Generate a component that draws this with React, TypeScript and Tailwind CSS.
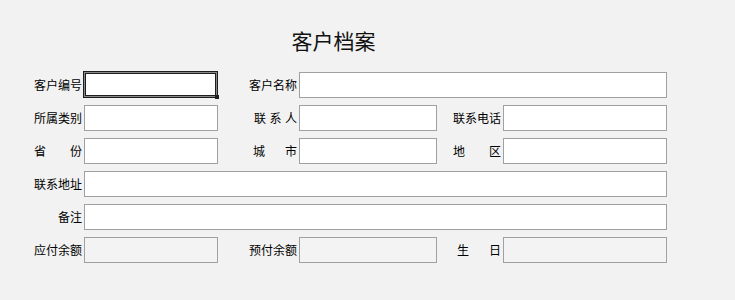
import React from "react";

const font = { fontFamily: '"Microsoft YaHei", "Noto Sans CJK SC", sans-serif' };

function Label({ text, spread, width = 48 }: { text: string; spread?: boolean; width?: number }) {
  // spread labels put their characters apart, like "省　份"
  if (spread) {
    return (
      <div className="flex h-[26px] items-center justify-end pr-[2px]">
        <div className="flex justify-between text-[12px] text-black" style={{ width }}>
          {text.split("").map((c, i) => (
            <span key={i}>{c}</span>
          ))}
        </div>
      </div>
    );
  }
  return (
    <div className="flex h-[26px] items-center justify-end whitespace-nowrap pr-[2px] text-[12px] text-black">
      {text}
    </div>
  );
}

function Field({ span, readOnly, focused }: { span?: string; readOnly?: boolean; focused?: boolean }) {
  if (focused) {
    return (
      <div className={`relative -ml-px h-[27px] w-[135px] -mt-px border border-[#1e1e1e] bg-white shadow-[inset_0_0_0_1px_#8a8a8a,inset_0_0_0_2px_#1e1e1e] ${span ?? ""}`}>
        <div className="absolute -bottom-[2px] -right-[2px] h-[4px] w-[4px] bg-[#1e1e1e]" />
      </div>
    );
  }
  return (
    <div
      className={`h-[26px] border border-[#a0a0a0] ${readOnly ? "bg-[#f3f3f3]" : "bg-white"} ${span ?? ""}`}
    />
  );
}

export default function App() {
  return (
    <div className="h-[300px] w-[735px] bg-[#f2f2f2]" style={font}>
      <div className="w-[667px] pt-[26px] text-center text-[21px] leading-[28px] text-[#111]">客户档案</div>
      <div className="mt-[18px] grid w-[667px] grid-cols-[84px_134px_81px_138px_66px_164px] gap-y-[7px]">
        <Label text="客户编号" />
        <Field focused />
        <Label text="客户名称" />
        <Field span="col-span-3" />

        <Label text="所属类别" />
        <Field />
        <Label text="联系人" spread width={43} />
        <Field />
        <Label text="联系电话" />
        <Field />

        <Label text="省份" spread />
        <Field />
        <Label text="城市" spread width={44} />
        <Field />
        <Label text="地区" spread />
        <Field />

        <Label text="联系地址" />
        <Field span="col-span-5" />

        <Label text="备注" />
        <Field span="col-span-5" />

        <Label text="应付余额" />
        <Field readOnly />
        <Label text="预付余额" />
        <Field readOnly />
        <Label text="生日" spread width={44} />
        <Field readOnly />
      </div>
    </div>
  );
}
